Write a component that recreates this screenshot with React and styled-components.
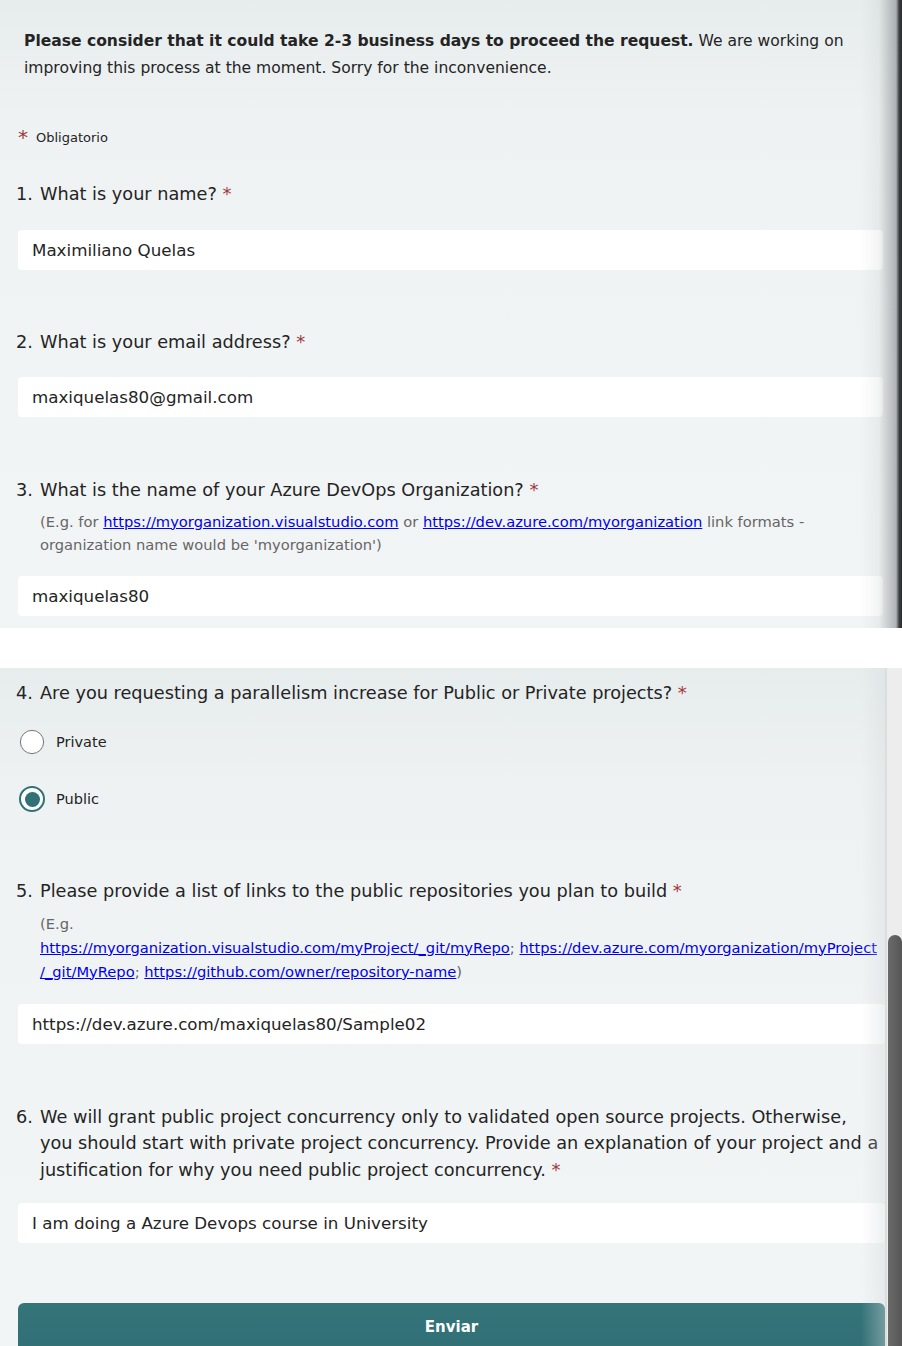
import React from 'react';
import styled, { createGlobalStyle } from 'styled-components';

const GlobalStyle = createGlobalStyle`
    body {
        margin: 0;
        background: #ffffff;
        font-family: "DejaVu Sans", "Liberation Sans", sans-serif;
        color: #242424;
    }
`;

const Page = styled.div`
    width: 902px;
`;

const Shot = styled.section`
    position: relative;
    height: ${props => props.height}px;
    overflow: hidden;
    background: linear-gradient(180deg, #e7eced 0%, #eef2f3 18%, #f1f4f5 60%, #f2f5f6 100%);
`;

const Gap = styled.div`
    height: 40px;
    background: #ffffff;
`;

const Form = styled.div`
    padding: ${props => props.padding};
`;

const Notice = styled.p`
    margin: 0;
    padding-left: 8px;
    font-size: 15.55px;
    line-height: 27px;
    white-space: nowrap;
`;

const Required = styled.div`
    display: flex;
    align-items: center;
    margin-top: 45px;
    padding-left: 2px;
    height: 20px;
    font-size: 13px;
`;

const Star = styled.span`
    color: #a4373a;
    font-size: ${props => props.size || '18px'};
    margin-right: ${props => props.gap || '0'};
    line-height: 1;
`;

const Question = styled.div`
    margin-top: ${props => props.top || '0'};
`;

const Title = styled.div`
    display: flex;
    font-size: 17.7px;
    line-height: 26.5px;
    white-space: nowrap;
`;

const Num = styled.span`
    width: 24px;
    flex: none;
`;

const Hint = styled.div`
    margin: ${props => props.margin || '6px 0 0'};
    padding-left: 24px;
    font-size: 14.7px;
    line-height: ${props => props.lh || '23px'};
    color: #666666;
    white-space: nowrap;
`;

const Link = styled.a`
    color: #0000ee;
    text-decoration: underline;
`;

const Field = styled.div`
    margin: ${props => props.margin || '22px 0 0 2px'};
    height: 40px;
    display: flex;
    align-items: center;
    padding-left: 14px;
    background: #ffffff;
    border-radius: 4px;
    font-size: 16.7px;
    color: #242424;
    white-space: nowrap;
`;

const Options = styled.div`
    display: flex;
    flex-direction: column;
    gap: 31px;
    margin-top: 22.5px;
    padding-left: 3px;
`;

const Option = styled.label`
    display: flex;
    align-items: center;
    height: 26px;
    font-size: 14.5px;
    gap: 11px;
`;

const Radio = styled.span`
    box-sizing: border-box;
    width: 26px;
    height: 26px;
    border-radius: 50%;
    display: flex;
    align-items: center;
    justify-content: center;
    background: #ffffff;
    border: ${props => props.checked ? '2.5px solid #2f7277' : '1.5px solid #6b6b6b'};
    transform: ${props => props.checked ? 'none' : 'scale(0.93)'};
`;

const Dot = styled.span`
    width: 15px;
    height: 15px;
    border-radius: 50%;
    background: #2f7277;
`;

const Submit = styled.button`
    display: block;
    width: calc(100% - 2px);
    margin: 60px 0 0 2px;
    height: 48px;
    border: none;
    border-radius: 6px 6px 0 0;
    background: linear-gradient(180deg, #34757a 0%, #316f75 100%);
    color: #ffffff;
    font-family: inherit;
    font-weight: bold;
    font-size: 15px;
    padding: 0;
`;

const EdgeShade = styled.div`
    position: absolute;
    top: 0;
    right: 0;
    bottom: 0;
    width: 42px;
    pointer-events: none;
    background: linear-gradient(90deg,
        rgba(160, 165, 168, 0) 0%,
        rgba(160, 165, 168, 0.12) 45%,
        rgba(120, 125, 128, 0.55) 86%,
        #6a6d6f 90%,
        #3a3b3c 94%,
        #2b2b2b 100%);
`;

const Fade = styled.div`
    position: absolute;
    top: 0;
    right: 17px;
    bottom: 0;
    width: 24px;
    pointer-events: none;
    background: linear-gradient(90deg, rgba(225, 228, 230, 0) 0%, rgba(214, 218, 220, 0.4) 100%);
`;

const Track = styled.div`
    position: absolute;
    top: 0;
    right: 0;
    bottom: 0;
    width: 17px;
    box-sizing: border-box;
    background: #ededed;
    border-left: 2px solid #dcdddd;
`;

const Thumb = styled.div`
    position: absolute;
    top: 267px;
    right: 0;
    bottom: -10px;
    width: 14px;
    border-radius: 7px 7px 0 0;
    background: linear-gradient(90deg, #6a6a6a, #565656);
`;

function App() {
    return (
        <Page>
            <GlobalStyle />

            <Shot height={628}>
                <Form padding="28px 19px 0 16px">
                    <Notice>
                        <b>Please consider that it could take 2-3 business days to proceed the request.</b> We are working on
                        <br />
                        improving this process at the moment. Sorry for the inconvenience.
                    </Notice>

                    <Required>
                        <Star size="20px" gap="8px">*</Star>
                        Obligatorio
                    </Required>

                    <Question top="34px">
                        <Title><Num>1.</Num><span>What is your name? <Star>*</Star></span></Title>
                        <Field>Maximiliano Quelas</Field>
                    </Question>

                    <Question top="59px">
                        <Title><Num>2.</Num><span>What is your email address? <Star>*</Star></span></Title>
                        <Field>maxiquelas80@gmail.com</Field>
                    </Question>

                    <Question top="60px">
                        <Title><Num>3.</Num><span>What is the name of your Azure DevOps Organization? <Star>*</Star></span></Title>
                        <Hint>
                            (E.g. for <Link href="#">https://myorganization.visualstudio.com</Link> or <Link href="#">https://dev.azure.com/myorganization</Link> link formats -
                            <br />
                            organization name would be 'myorganization')
                        </Hint>
                        <Field margin="20px 0 0 2px">maxiquelas80</Field>
                    </Question>
                </Form>
                <EdgeShade />
            </Shot>

            <Gap />

            <Shot height={678}>
                <Form padding="12px 17px 0 16px">
                    <Question>
                        <Title><Num>4.</Num><span>Are you requesting a parallelism increase for Public or Private projects? <Star>*</Star></span></Title>
                        <Options>
                            <Option><Radio /><span>Private</span></Option>
                            <Option><Radio checked><Dot /></Radio><span>Public</span></Option>
                        </Options>
                    </Question>

                    <Question top="66px">
                        <Title><Num>5.</Num><span>Please provide a list of links to the public repositories you plan to build <Star>*</Star></span></Title>
                        <Hint margin="7px 0 0" lh="24px">
                            (E.g.
                            <br />
                            <Link href="#">https://myorganization.visualstudio.com/myProject/_git/myRepo</Link>; <Link href="#">https://dev.azure.com/myorganization/myProject<br />/_git/MyRepo</Link>; <Link href="#">https://github.com/owner/repository-name</Link>)
                        </Hint>
                        <Field margin="20px 0 0 2px">https://dev.azure.com/maxiquelas80/Sample02</Field>
                    </Question>

                    <Question top="60px">
                        <Title>
                            <Num>6.</Num>
                            <span>
                                We will grant public project concurrency only to validated open source projects. Otherwise,
                                <br />
                                you should start with private project concurrency. Provide an explanation of your project and a
                                <br />
                                justification for why you need public project concurrency. <Star>*</Star>
                            </span>
                        </Title>
                        <Field margin="20px 0 0 2px">I am doing a Azure Devops course in University</Field>
                    </Question>

                    <Submit>Enviar</Submit>
                </Form>
                <Fade />
                <Track>
                    <Thumb />
                </Track>
            </Shot>
        </Page>
    );
}

export default App;
